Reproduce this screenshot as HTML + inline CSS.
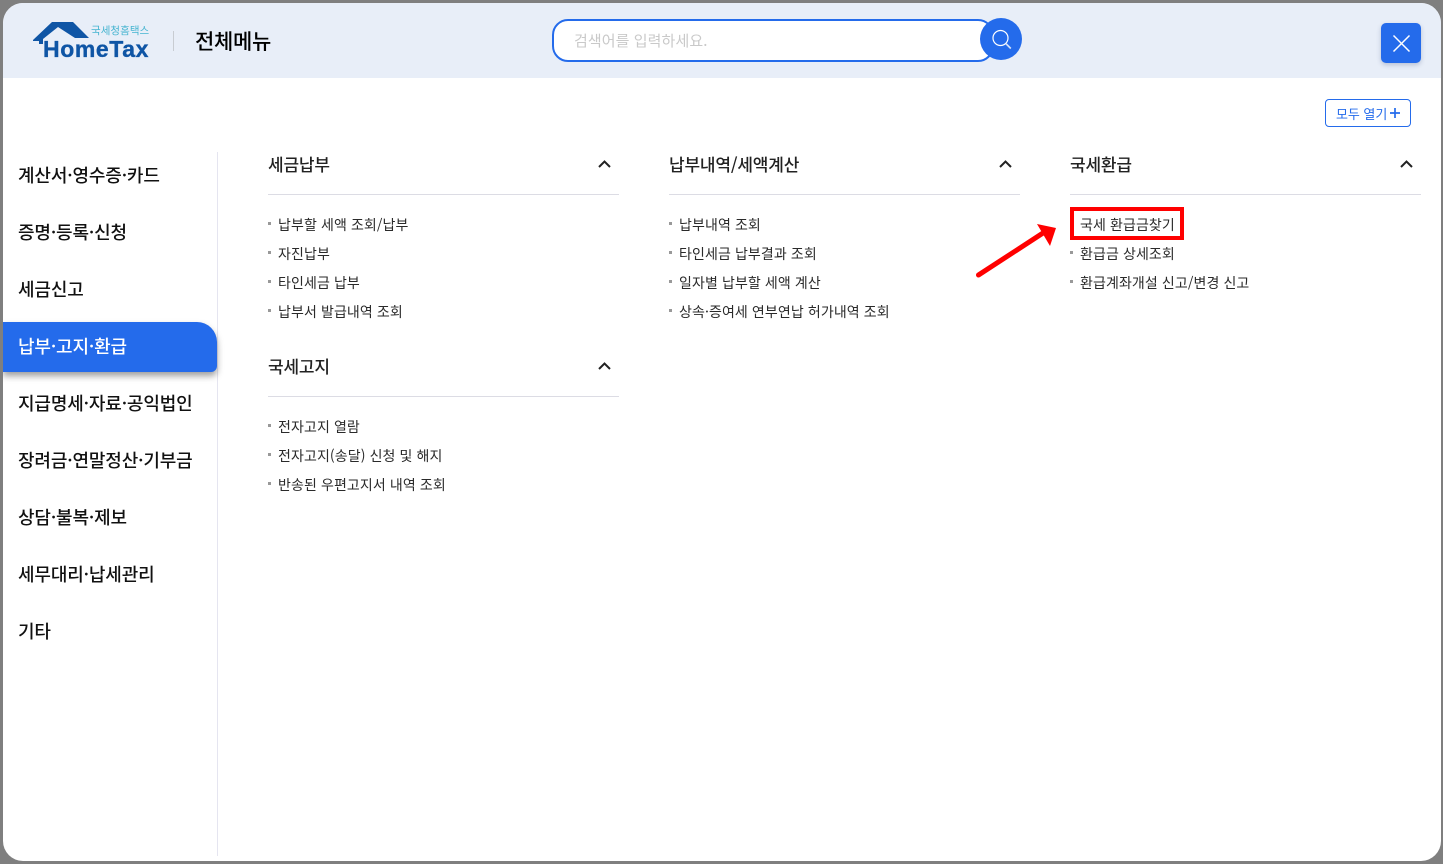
<!DOCTYPE html>
<html lang="ko"><head><meta charset="utf-8"><title>전체메뉴</title>
<style>
html,body{margin:0;padding:0;width:1443px;height:864px;overflow:hidden;background:#7f7f7f;font-family:"Liberation Sans","Noto Sans CJK KR",sans-serif}
#m{position:absolute;left:3px;top:3px;width:1438px;height:858px;background:#fff;border-radius:20px;overflow:hidden}
#h{position:absolute;left:0;top:0;width:1438px;height:75px;background:#e8eef8}
.t{position:absolute;white-space:nowrap;font-family:"Noto Sans CJK KR","Liberation Sans",sans-serif}
.l{font-size:18px;font-weight:500;color:#111;line-height:26px;left:15px;letter-spacing:-.15px}
.s{font-size:17px;font-weight:500;color:#222;line-height:24px;letter-spacing:-.18px}
.i{font-size:14px;color:#2a2a2a;line-height:20px;letter-spacing:.1px}
.d{position:absolute;width:3px;height:3px;background:#999}
.r{position:absolute;height:1px;width:351px;background:#dcdce4}
.c{position:absolute}
</style></head><body>
<div id="m">
<div id="h"></div>
<svg class="c" style="left:28px;top:18px" width="70" height="26" viewBox="0 0 70 26"><path d="M2 19 L21 1 H42 L58 17 H44 L27 6 L12 18 V23 H8 V20 H2Z" fill="#0f55a5"/></svg>
<div class="t" style="left:40px;top:32px;font:700 23px/28px 'Liberation Sans',sans-serif;color:#0f55a5;letter-spacing:.6px;-webkit-text-stroke:.35px #0f55a5">HomeTax</div>
<div class="t" style="left:88px;top:21px;font-size:10.5px;line-height:14px;color:#45b4d0;letter-spacing:.05px">국세청홈택스</div>
<div class="c" style="left:170px;top:28px;width:1px;height:20px;background:#c8ccd2"></div>
<div class="t" style="left:192px;top:24px;font-size:21px;font-weight:500;line-height:29px;color:#000;letter-spacing:-.3px">전체메뉴</div>
<div class="c" style="left:549px;top:16px;width:438px;height:39px;border:2px solid #246beb;border-radius:16px;background:#fff"></div>
<div class="t" style="left:571px;top:27px;font-size:15px;line-height:21px;color:#c9c9c9;letter-spacing:.08px">검색어를 입력하세요.</div>
<div class="c" style="left:977px;top:15px;width:42px;height:42px;border-radius:50%;background:#246beb"></div>
<svg class="c" style="left:987px;top:25px" width="22" height="22" viewBox="0 0 22 22"><circle cx="10.500" cy="10" r="7.500" fill="none" stroke="#fff" stroke-width="1.200"/><path d="M15.800 15.500 L20.800 20.500" stroke="#d5e2fa" stroke-width="1.600"/></svg>
<div class="c" style="left:1378px;top:20px;width:40px;height:40px;border-radius:5px;background:#246beb;box-shadow:0 2px 5px rgba(40,60,110,.25)"></div>
<svg class="c" style="left:1378px;top:20px" width="40" height="40" viewBox="0 0 40 40"><path d="M12.500 12.500 L28.500 28.500 M28.500 12.500 L12.500 28.500" stroke="#fff" stroke-width="1.500"/></svg>
<div class="c" style="left:1322px;top:96px;width:84px;height:26px;border:1px solid #246beb;border-radius:4px;background:#fff"></div>
<div class="t" style="left:1333px;top:101px;font-size:13px;line-height:19px;color:#246beb;letter-spacing:-.05px">모두 열기</div>
<svg class="c" style="left:1386px;top:104px" width="12" height="12" viewBox="0 0 12 12"><path d="M1 6H11M6 1V11" stroke="#246beb" stroke-width="1.700"/></svg>

<div class="c" style="left:214px;top:149px;width:1px;height:704px;background:#e5e5f0"></div>
<div class="t l" style="top:159px">계산서·영수증·카드</div>
<div class="t l" style="top:216px">증명·등록·신청</div>
<div class="t l" style="top:273px">세금신고</div>
<div class="c" style="left:0;top:319px;width:214px;height:50px;background:#246beb;border-radius:0 20px 6px 0;box-shadow:0 4px 7px rgba(0,0,0,.38)"></div>
<div class="t l" style="top:330px;color:#fff">납부·고지·환급</div>
<div class="t l" style="top:387px">지급명세·자료·공익법인</div>
<div class="t l" style="top:444px">장려금·연말정산·기부금</div>
<div class="t l" style="top:501px">상담·불복·제보</div>
<div class="t l" style="top:558px">세무대리·납세관리</div>
<div class="t l" style="top:615px">기타</div>

<div class="t s" style="left:265px;top:149px">세금납부</div>
<div class="r" style="left:265px;top:191px"></div>
<div class="d" style="left:265px;top:219px"></div><div class="t i" style="left:275px;top:212px">납부할 세액 조회/납부</div>
<div class="d" style="left:265px;top:248px"></div><div class="t i" style="left:275px;top:241px">자진납부</div>
<div class="d" style="left:265px;top:277px"></div><div class="t i" style="left:275px;top:270px">타인세금 납부</div>
<div class="d" style="left:265px;top:306px"></div><div class="t i" style="left:275px;top:299px">납부서 발급내역 조회</div>
<div class="t s" style="left:265px;top:351px">국세고지</div>
<div class="r" style="left:265px;top:393px"></div>
<div class="d" style="left:265px;top:421px"></div><div class="t i" style="left:275px;top:414px">전자고지 열람</div>
<div class="d" style="left:265px;top:450px"></div><div class="t i" style="left:275px;top:443px">전자고지(송달) 신청 및 해지</div>
<div class="d" style="left:265px;top:479px"></div><div class="t i" style="left:275px;top:472px">반송된 우편고지서 내역 조회</div>

<div class="t s" style="left:666px;top:149px">납부내역/세액계산</div>
<div class="r" style="left:666px;top:191px"></div>
<div class="d" style="left:666px;top:219px"></div><div class="t i" style="left:676px;top:212px">납부내역 조회</div>
<div class="d" style="left:666px;top:248px"></div><div class="t i" style="left:676px;top:241px">타인세금 납부결과 조회</div>
<div class="d" style="left:666px;top:277px"></div><div class="t i" style="left:676px;top:270px">일자별 납부할 세액 계산</div>
<div class="d" style="left:666px;top:306px"></div><div class="t i" style="left:676px;top:299px">상속·증여세 연부연납 허가내역 조회</div>

<div class="t s" style="left:1067px;top:149px">국세환급</div>
<div class="r" style="left:1067px;top:191px"></div>
<div class="t i" style="left:1077px;top:212px">국세 환급금찾기</div>
<div class="d" style="left:1067px;top:248px"></div><div class="t i" style="left:1077px;top:241px">환급금 상세조회</div>
<div class="d" style="left:1067px;top:277px"></div><div class="t i" style="left:1077px;top:270px">환급계좌개설 신고/변경 신고</div>

<svg class="c" style="left:590px;top:152px" width="24" height="16" viewBox="0 0 24 16"><path d="M6 12 L11.500 6.500 L17 12" fill="none" stroke="#222" stroke-width="2"/></svg>
<svg class="c" style="left:590px;top:354px" width="24" height="16" viewBox="0 0 24 16"><path d="M6 12 L11.500 6.500 L17 12" fill="none" stroke="#222" stroke-width="2"/></svg>
<svg class="c" style="left:991px;top:152px" width="24" height="16" viewBox="0 0 24 16"><path d="M6 12 L11.500 6.500 L17 12" fill="none" stroke="#222" stroke-width="2"/></svg>
<svg class="c" style="left:1392px;top:152px" width="24" height="16" viewBox="0 0 24 16"><path d="M6 12 L11.500 6.500 L17 12" fill="none" stroke="#222" stroke-width="2"/></svg>

<div class="c" style="left:1067px;top:204px;width:114px;height:33px;box-sizing:border-box;border:4px solid #f00"></div>
<svg class="c" style="left:970px;top:215px" width="90" height="65" viewBox="0 0 90 65"><path d="M5.500 57 L70 15" stroke="#f00" stroke-width="5" stroke-linecap="round"/><path d="M83 10 L64 6 L77 28Z" fill="#f00"/></svg>
</div>
</body></html>
